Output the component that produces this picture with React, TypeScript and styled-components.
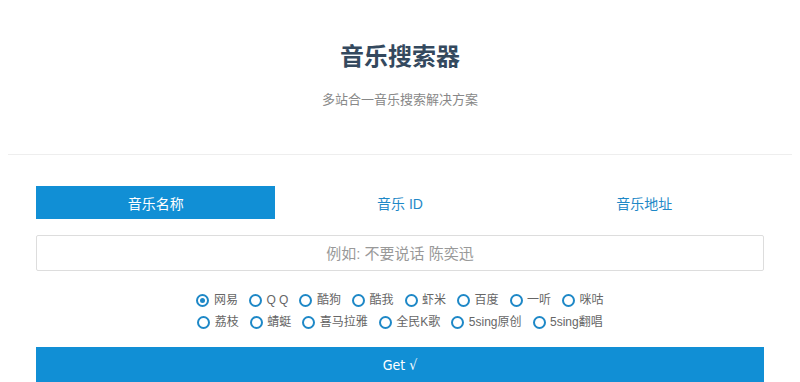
import React, { useState } from 'react';
import styled, { createGlobalStyle } from 'styled-components';

const GlobalStyle = createGlobalStyle`
  html, body {
    margin: 0;
    padding: 0;
    background: #fff;
  }
  body {
    font-family: "Liberation Sans", "Noto Sans CJK SC", sans-serif;
    color: #333;
  }
  * { box-sizing: border-box; }
`;

const Page = styled.div`
  width: 800px;
  height: 382px;
  overflow: hidden;
`;

const Header = styled.header`
  display: flex;
  flex-direction: column;
  align-items: center;
  padding-top: 40px;
  height: 154px;
`;

const Title = styled.h1`
  margin: 0;
  font-size: 24px;
  line-height: 34px;
  font-weight: 700;
  color: #34495e;
`;

const Subtitle = styled.p`
  margin: 16px 0 0;
  font-size: 13px;
  line-height: 20px;
  color: #888;
`;

const Divider = styled.hr`
  margin: 0 8px;
  border: 0;
  border-top: 1px solid #eee;
`;

const Main = styled.main`
  padding: 31px 36px 0;
`;

const Tabs = styled.div`
  display: grid;
  grid-template-columns: repeat(3, 1fr);
  column-gap: 5px;
  height: 33px;
`;

const Tab = styled.button<{ $active?: boolean }>`
  border: 0;
  margin: 0;
  padding: 0;
  font-family: inherit;
  font-size: 14px;
  cursor: pointer;
  background: ${(p) => (p.$active ? '#118fd5' : 'transparent')};
  color: ${(p) => (p.$active ? '#fff' : '#1e88c7')};
`;

const SearchInput = styled.input`
  display: block;
  width: 100%;
  height: 36px;
  margin-top: 16px;
  border: 1px solid #ddd;
  border-radius: 2px;
  text-align: center;
  font-family: inherit;
  font-size: 15px;
  color: #333;
  outline: none;
  &::placeholder {
    color: #999;
  }
`;

const RadioGroup = styled.div`
  display: flex;
  flex-direction: column;
  align-items: center;
  gap: 6px;
  margin-top: 21px;
`;

const RadioRow = styled.div`
  display: flex;
  gap: 11px;
`;

const RadioLabel = styled.label`
  display: flex;
  align-items: center;
  gap: 4.5px;
  font-size: 12px;
  line-height: 16px;
  color: #666;
  cursor: pointer;
`;

const RadioDot = styled.span<{ $checked?: boolean }>`
  width: 13px;
  height: 13px;
  border-radius: 50%;
  border: 2px solid #1e88c7;
  display: flex;
  align-items: center;
  justify-content: center;
  &::after {
    content: '';
    width: 5px;
    height: 5px;
    border-radius: 50%;
    background: ${(p) => (p.$checked ? '#1e88c7' : 'transparent')};
  }
`;

const GetButton = styled.button`
  display: block;
  width: 100%;
  height: 36px;
  margin-top: 17px;
  border: 0;
  background: #118fd5;
  color: #fff;
  font-family: "DejaVu Sans Condensed", "Liberation Sans", sans-serif;
  font-size: 14px;
  cursor: pointer;
`;

const tabs = ['音乐名称', '音乐 ID', '音乐地址'];
const sites = [
  ['网易', 'Q Q', '酷狗', '酷我', '虾米', '百度', '一听', '咪咕'],
  ['荔枝', '蜻蜓', '喜马拉雅', '全民K歌', '5sing原创', '5sing翻唱'],
];

export default function App() {
  const [tab, setTab] = useState(0);
  const [site, setSite] = useState('网易');
  return (
    <Page>
      <GlobalStyle />
      <Header>
        <Title>音乐搜索器</Title>
        <Subtitle>多站合一音乐搜索解决方案</Subtitle>
      </Header>
      <Divider />
      <Main>
        <Tabs>
          {tabs.map((t, i) => (
            <Tab key={t} $active={i === tab} onClick={() => setTab(i)}>
              {t}
            </Tab>
          ))}
        </Tabs>
        <SearchInput placeholder="例如: 不要说话 陈奕迅" />
        <RadioGroup>
          {sites.map((row, r) => (
            <RadioRow key={r}>
              {row.map((s) => (
                <RadioLabel key={s} onClick={() => setSite(s)}>
                  <RadioDot $checked={s === site} />
                  {s}
                </RadioLabel>
              ))}
            </RadioRow>
          ))}
        </RadioGroup>
        <GetButton>Get √</GetButton>
      </Main>
    </Page>
  );
}
